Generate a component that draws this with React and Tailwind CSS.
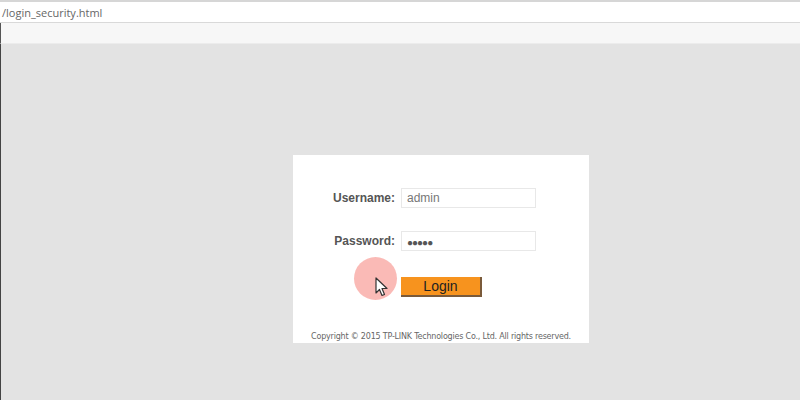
export default function App() {
  return (
    <div className="relative w-[800px] h-[400px] overflow-hidden bg-[#e3e3e3] font-['Liberation_Sans',Arial,sans-serif]">
      <div className="h-[2px] bg-[#d6d6d6]" />
      <div className="h-[21px] bg-white border-b border-[#d9d9d9] flex items-center pl-[2px] pt-[2px]">
        <span className="text-[11px] text-[#666] font-['Open_Sans',sans-serif]">/login_security.html</span>
      </div>
      <div className="h-[21px] bg-[#f7f7f7] border-b border-[#ececec] border-l border-l-[#555]" />
      <div className="flex border-l border-[#444] h-[356px]">
        <div className="ml-[292px] mt-[111px] w-[296px] h-[188px] bg-white flex flex-col">
          <div className="mt-[33px] flex items-center h-[20px]">
            <span className="w-[102px] text-right text-[12px] font-bold text-[#555]">Username:</span>
            <div className="ml-[6px] w-[135px] h-[20px] border border-[#e8e8e8] flex items-center px-[5px] text-[12px] text-[#777]">admin</div>
          </div>
          <div className="mt-[23px] flex items-center h-[20px]">
            <span className="w-[102px] text-right text-[12px] font-bold text-[#555]">Password:</span>
            <div className="ml-[6px] w-[135px] h-[20px] border border-[#e8e8e8] flex items-center px-[5px] pt-[2px] text-[10px] tracking-[-1px] text-[#555]">●●●●●</div>
          </div>
          <div className="mt-[26px] ml-[108px] w-[81px] h-[20px] bg-[#f7931e] border-r-2 border-b-2 border-[#7a5a3a] flex items-center justify-center pt-[1px] text-[14px] text-[#222]">Login</div>
          <div className="mt-auto mb-[2px] leading-[8px] text-center text-[8px] text-[#666] font-['DejaVu_Sans',sans-serif] tracking-[-0.2px]">Copyright © 2015 TP-LINK Technologies Co., Ltd. All rights reserved.</div>
        </div>
      </div>
      <div className="absolute left-[354px] top-[257px] w-[43px] h-[43px] rounded-full bg-[#f9b2ae]/90" />
      <svg className="absolute left-[375px] top-[277px]" width="13" height="20" viewBox="0 0 13 20">
        <path d="M1 1 L1 16 L4.5 12.5 L7 18.5 L9.5 17.5 L7 11.5 L12 11.5 Z" fill="#fff" stroke="#333" strokeWidth="1.2" strokeLinejoin="round" />
      </svg>
    </div>
  );
}
